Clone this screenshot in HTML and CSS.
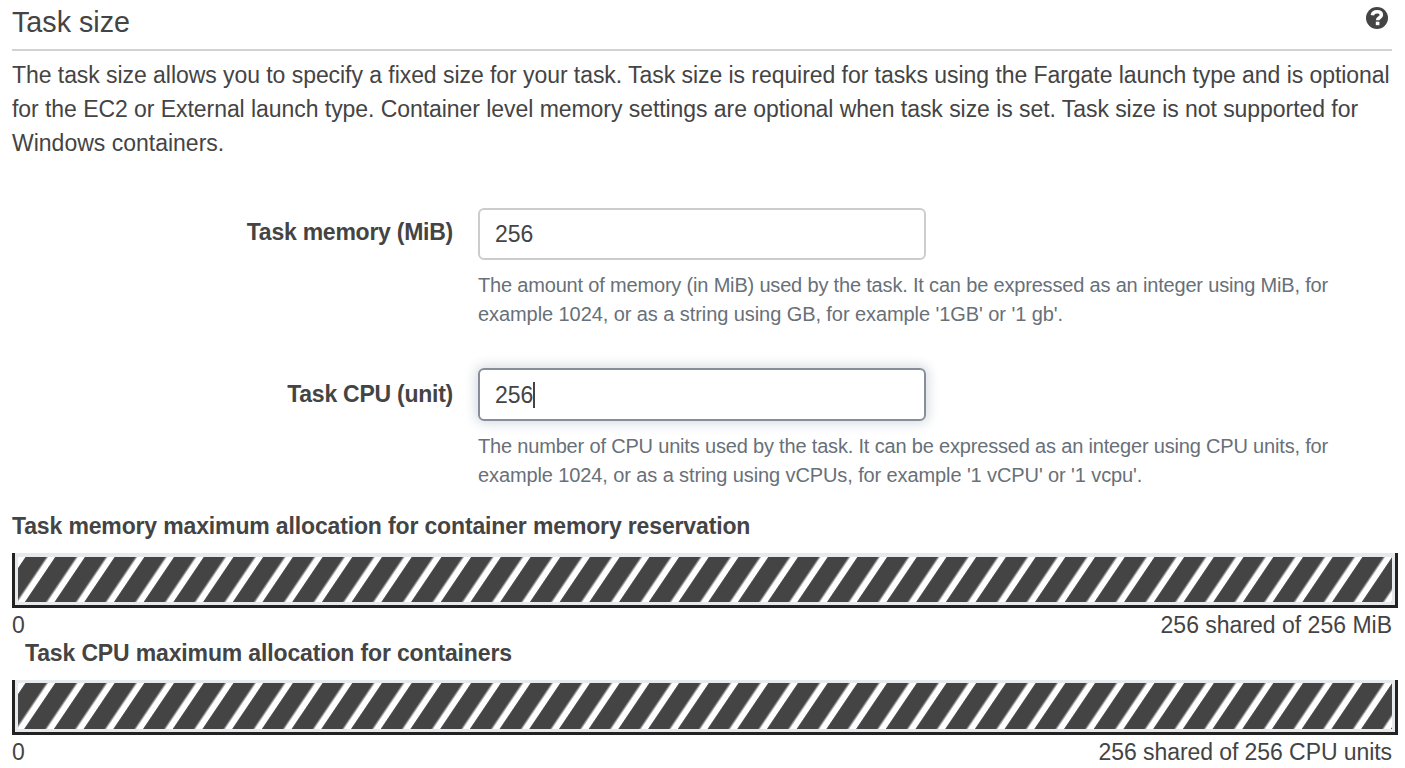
FILE: index.html
```html
<!DOCTYPE html>
<html lang="en">
<head>
<meta charset="utf-8">
<title>Task size</title>
<link rel="stylesheet" href="styles.css">
</head>
<body>
<main class="panel">
  <header class="header">
    <h1 class="title">Task size</h1>
    <svg class="help-icon" viewBox="0 0 22 22" aria-label="Help"><circle cx="11" cy="11" r="11" fill="#444"/><path d="M6.300 8.300C6.800 5.600 8.600 4.800 11 4.800c2.700 0 4.400 1.200 4.400 3.200 0 2.900-3.800 2.700-3.800 5.300" fill="none" stroke="#fff" stroke-width="3.500"/><path d="M9.800 14.700h3.600v3.500H9.800z" fill="#fff"/></svg>
  </header>
  <p class="intro"><span class="line i1">The task size allows you to specify a fixed size for your task. Task size is required for tasks using the Fargate launch type and is optional</span><span class="line i2">for the EC2 or External launch type. Container level memory settings are optional when task size is set. Task size is not supported for</span><span class="line i3">Windows containers.</span></p>
  <div class="field">
    <label class="label">Task memory (MiB)</label>
    <div class="control">
      <div class="input">256</div>
      <p class="hint"><span class="line h1">The amount of memory (in MiB) used by the task. It can be expressed as an integer using MiB, for</span><span class="line h2">example 1024, or as a string using GB, for example '1GB' or '1 gb'.</span></p>
    </div>
  </div>
  <div class="field cpu">
    <label class="label">Task CPU (unit)</label>
    <div class="control">
      <div class="input focused">256<i class="caret"></i></div>
      <p class="hint"><span class="line h3">The number of CPU units used by the task. It can be expressed as an integer using CPU units, for</span><span class="line h4">example 1024, or as a string using vCPUs, for example '1 vCPU' or '1 vcpu'.</span></p>
    </div>
  </div>
  <section class="allocation">
    <h2 class="heading">Task memory maximum allocation for container memory reservation</h2>
    <div class="meter">
      <svg class="stripes" width="1374" height="45">
        <defs><pattern id="stripe" width="29.71" height="60" patternUnits="userSpaceOnUse" patternTransform="translate(28.200 0) skewX(-34)"><rect width="29.71" height="60" fill="#444"/><rect width="1" height="60" fill="#777"/><rect x="1" width="1" height="60" fill="#b5b5b8"/><rect x="2" width="7" height="60" fill="#fff"/></pattern></defs>
        <rect width="1374" height="45" fill="url(#stripe)"/>
      </svg>
    </div>
    <div class="scale"><span>0</span><span class="s1">256 shared of 256 MiB</span></div>
  </section>
  <section class="allocation">
    <h2 class="heading indented">Task CPU maximum allocation for containers</h2>
    <div class="meter tall">
      <svg class="stripes" width="1374" height="46"><rect width="1374" height="46" fill="url(#stripe)"/></svg>
    </div>
    <div class="scale"><span>0</span><span class="s2">256 shared of 256 CPU units</span></div>
  </section>
</main>
</body>
</html>
```
FILE: styles.css
```css
* { box-sizing: border-box; }
body { margin: 0; height: 768px; overflow: hidden; background: #fff; color: #444; font: 23px/34px "Liberation Sans", Arial, sans-serif; }
h1, h2, p { margin: 0; }
.panel { padding: 0 7px 0 12px; }
.header { display: flex; justify-content: space-between; height: 51px; margin-right: 6px; padding-right: 4px; border-bottom: 2px solid #d0d3d6; }
.title { padding-top: 5px; font-size: 28.7px; font-weight: 400; }
.help-icon { width: 22px; height: 22px; margin-top: 7px; }
.line { display: block; width: max-content; white-space: nowrap; }
.intro { padding-top: 7px; letter-spacing: -0.055px; }
.i3 { letter-spacing: 0; }
.field { display: grid; grid-template-columns: 441px 850px; column-gap: 25px; margin-top: 48px; }
.cpu { margin-top: 39px; }
.label { padding-top: 7px; text-align: right; font-weight: 700; letter-spacing: -0.25px; white-space: nowrap; }
.cpu .label { padding-top: 9px; }
.input { display: flex; align-items: center; width: 448px; height: 52px; padding-left: 15px; border: 2px solid #ccc; border-radius: 6px; }
.focused { height: 53px; border-color: #878e99; box-shadow: 0 0 12px 3px #d9dfe3; }
.caret { width: 2px; height: 26px; background: #444; }
.hint { padding-top: 11px; color: #687078; font-size: 20px; line-height: 29px; }
.h1, .h3 { letter-spacing: -0.178px; }
.h2 { letter-spacing: -0.075px; }
.h4 { letter-spacing: -0.107px; }
.heading { font-size: 23px; line-height: 34px; letter-spacing: -0.145px; white-space: nowrap; width: max-content; }
.indented { padding-left: 13px; }
.allocation { height: 127px; }
.cpu + .allocation { margin-top: 19px; }
.meter { height: 55px; margin-top: 10px; padding: 4px 3px 3px; border: solid #222; border-width: 0 3px 3px; background: #e7eaed; }
.tall { padding-top: 3px; }
.stripes { display: block; }
.scale { display: flex; justify-content: space-between; height: 28px; padding-right: 6px; line-height: 34px; }
.s2 { letter-spacing: -0.07px; }
```
